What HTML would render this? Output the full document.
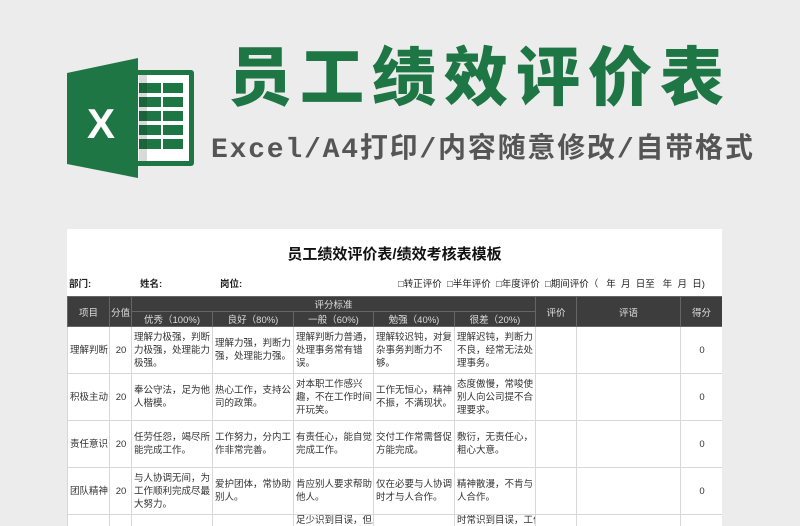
<!DOCTYPE html>
<html><head><meta charset="utf-8"><style>
*{margin:0;padding:0;box-sizing:border-box}
html,body{width:800px;height:526px;overflow:hidden}
body{background:#ececec;position:relative;font-family:"Liberation Sans","Noto Sans CJK SC",sans-serif}
.t1{position:absolute;left:228px;top:38px;font-size:64px;font-weight:900;color:#1e7645;letter-spacing:8px;white-space:nowrap;line-height:80px}
.t2{position:absolute;left:211px;top:131px;font-size:28px;color:#555;font-weight:700;white-space:nowrap;line-height:40px;font-family:"Liberation Mono","Noto Sans CJK SC",monospace;letter-spacing:1.8px}
.card{position:absolute;left:67px;top:229px;width:655px;height:297px;background:#fff;overflow:hidden}
.ct{position:absolute;left:0;width:655px;top:14px;text-align:center;font-size:15px;font-weight:700;color:#111}
.info{position:absolute;top:47px;font-size:9.5px;color:#222;white-space:nowrap}
table{position:absolute;left:0;top:67px;border-collapse:collapse;table-layout:fixed;width:655px;font-size:9.5px;color:#333}
td{border:1px solid #d8d8d8;vertical-align:middle;line-height:13px;padding:0 1px 0 2px;overflow:hidden}
th{background:#3d3d3d;color:#ddd;font-weight:400;border:1px solid #666;height:15px;font-size:9.5px}
.c{text-align:center}
tr.r td{height:47px}
tr.l td{height:11px;line-height:11px;border-bottom:none;white-space:nowrap;vertical-align:top}
</style></head><body>
<svg style="position:absolute;left:60px;top:55px" width="140" height="130" viewBox="60 55 140 130">
<rect x="128" y="70" width="66" height="96" rx="3" fill="#1e7645"/>
<rect x="133" y="75" width="56" height="86" fill="#fff"/>
<g fill="#1e7645">
<rect x="139" y="83" width="22" height="10"/><rect x="163" y="83" width="20" height="10"/>
<rect x="139" y="97" width="22" height="10"/><rect x="163" y="97" width="20" height="10"/>
<rect x="139" y="111" width="22" height="10"/><rect x="163" y="111" width="20" height="10"/>
<rect x="139" y="125" width="22" height="10"/><rect x="163" y="125" width="20" height="10"/>
<rect x="139" y="139" width="22" height="10"/><rect x="163" y="139" width="20" height="10"/>
</g>
<rect x="139" y="75" width="8" height="86" fill="#000" opacity=".15"/>
<polygon points="67,73 138,58 138,178 67,164" fill="#1e7645"/>
<text x="101" y="138" font-family="Liberation Sans" font-weight="700" font-size="42" fill="#fff" text-anchor="middle">X</text>
</svg>
<div class="t1">员工绩效评价表</div>
<div class="t2">Excel/A4打印/内容随意修改/自带格式</div>
<div class="card">
<div class="ct">员工绩效评价表/绩效考核表模板</div>
<div class="info" style="left:2px;font-weight:700">部门:</div>
<div class="info" style="left:73px;font-weight:700">姓名:</div>
<div class="info" style="left:153px;font-weight:700">岗位:</div>
<div class="info" style="left:331px">□转正评价 &nbsp;□半年评价 &nbsp;□年度评价 &nbsp;□期间评价（ &nbsp; 年 &nbsp;月 &nbsp;日至 &nbsp; 年 &nbsp;月 &nbsp;日)</div>
<table>
<colgroup><col style="width:42px"><col style="width:22px"><col style="width:81px"><col style="width:81px"><col style="width:80px"><col style="width:81px"><col style="width:81px"><col style="width:41px"><col style="width:104px"><col style="width:42px"></colgroup>
<tr><th rowspan="2">项目</th><th rowspan="2">分值</th><th colspan="5">评分标准</th><th rowspan="2">评价</th><th rowspan="2">评语</th><th rowspan="2">得分</th></tr>
<tr><th>优秀（100%)</th><th>良好（80%)</th><th>一般（60%)</th><th>勉强（40%)</th><th>很差（20%)</th></tr>
<tr class="r"><td class="c">理解判断</td><td class="c">20</td><td>理解力极强，判断力极强，处理能力极强。</td><td>理解力强，判断力强，处理能力强。</td><td>理解判断力普通，处理事务常有错误。</td><td>理解较迟钝，对复杂事务判断力不够。</td><td>理解迟钝，判断力不良，经常无法处理事务。</td><td></td><td></td><td class="c">0</td></tr>
<tr class="r"><td class="c">积极主动</td><td class="c">20</td><td>奉公守法，足为他人楷模。</td><td>热心工作，支持公司的政策。</td><td>对本职工作感兴趣，不在工作时间开玩笑。</td><td>工作无恒心，精神不振，不满现状。</td><td>态度傲慢，常唆使别人向公司提不合理要求。</td><td></td><td></td><td class="c">0</td></tr>
<tr class="r"><td class="c">责任意识</td><td class="c">20</td><td>任劳任怨，竭尽所能完成工作。</td><td>工作努力，分内工作非常完善。</td><td>有责任心，能自觉完成工作。</td><td>交付工作常需督促方能完成。</td><td>敷衍，无责任心，粗心大意。</td><td></td><td></td><td class="c">0</td></tr>
<tr class="r"><td class="c">团队精神</td><td class="c">20</td><td>与人协调无间，为工作顺利完成尽最大努力。</td><td>爱护团体，常协助别人。</td><td>肯应别人要求帮助他人。</td><td>仅在必要与人协调时才与人合作。</td><td>精神散漫，不肯与人合作。</td><td></td><td></td><td class="c">0</td></tr>
<tr class="l"><td></td><td></td><td></td><td></td><td>足少识到目误，但上</td><td></td><td>时常识到目误，工作</td><td></td><td></td><td></td></tr>
</table>
</div>
</body></html>
